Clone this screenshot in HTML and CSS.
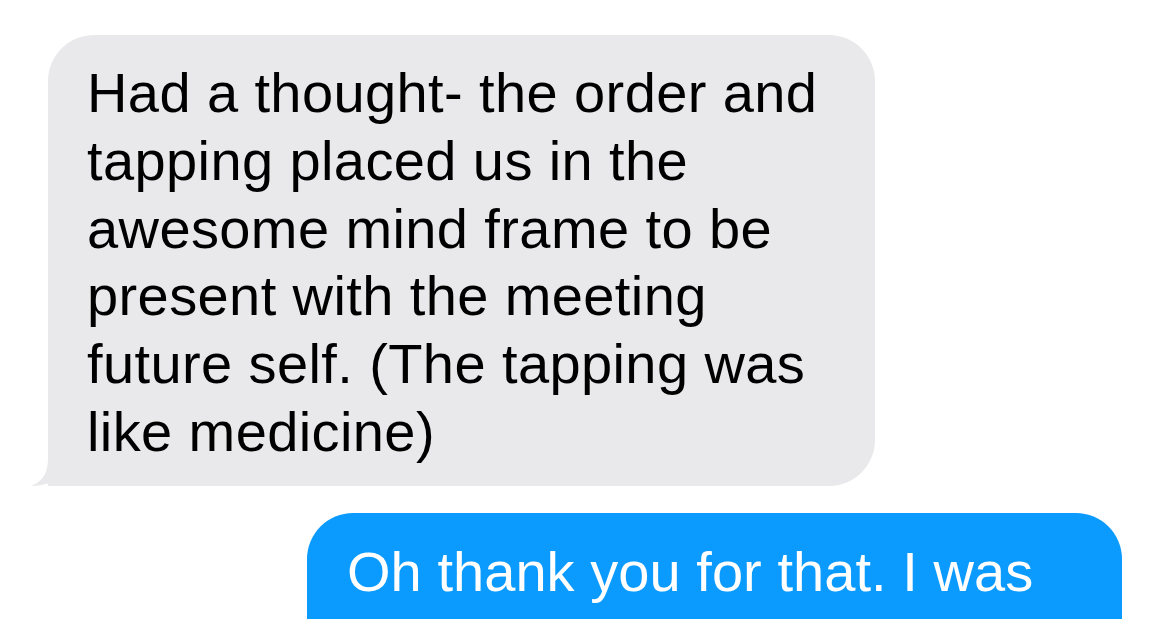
FILE: index.html
```html
<!DOCTYPE html>
<html lang="en">
<head>
    <meta charset="UTF-8">
    <meta name="viewport" content="width=device-width, initial-scale=1.0">
    <title>Messages</title>
    <link rel="stylesheet" href="styles.css">
</head>
<body>
    <div class="thread">
        <div class="row incoming">
            <div class="bubble gray">
                <svg class="tail" viewBox="0 0 70 40" width="70" height="40">
                    <path d="M18 0 L18 12 C18 27 13 35 1 40 C14 40 26 36 33 29 C40 36 50 40 60 40 L70 40 L70 0 Z" fill="#e9e9eb"/>
                </svg>
                <p class="text">Had a thought- the order and tapping placed us in the awesome mind frame to be present with the meeting future self. (The tapping was like medicine)</p>
            </div>
        </div>
        <div class="row outgoing">
            <div class="bubble blue">
                <p class="text">Oh thank you for that. I was wondering if the tapping would help</p>
            </div>
        </div>
    </div>
</body>
</html>
```

FILE: styles.css
```css
body {
    margin: 0;
    background-color: #fff;
    font-family: "Liberation Sans", Arial, sans-serif;
    overflow: hidden;
}
.thread {
    display: flex;
    flex-direction: column;
    gap: 27px;
    padding: 35px 48px 0 48px;
}
.row {
    display: flex;
}
.outgoing {
    justify-content: flex-end;
}
.bubble {
    position: relative;
    box-sizing: border-box;
    font-size: 56px;
    line-height: 67.8px;
    border-radius: 46px;
}
.text {
    position: relative;
    margin: 0;
}
.gray {
    width: 827px;
    padding: 24px 30px 20px 39px;
    background-color: #e9e9eb;
    color: #000;
    letter-spacing: 0.4px;
    border-bottom-left-radius: 0;
}
.blue {
    width: 815px;
    padding: 25px 30px 20px 40px;
    background-color: #0b9bfe;
    color: #fff;
    letter-spacing: 0.05px;
}
.tail {
    position: absolute;
    left: -18px;
    bottom: 0;
    display: block;
}
```
